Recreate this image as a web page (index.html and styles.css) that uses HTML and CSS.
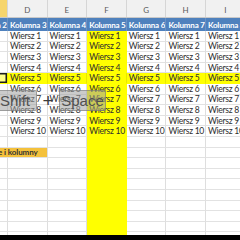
FILE: index.html
```html
<!DOCTYPE html>
<html>
<head>
<meta charset="utf-8">
<link rel="stylesheet" href="styles.css">
</head>
<body>
<div class="screen">
  <div class="sheet">
    <div class="row colheads">
      <div class="ch sel">C</div><div class="ch">D</div><div class="ch">E</div><div class="ch">F</div><div class="ch">G</div><div class="ch">H</div><div class="ch">I</div>
    </div>
    <div class="row thead">
      <div class="th">Kolumna 2</div><div class="th">Kolumna 3</div><div class="th">Kolumna 4</div><div class="th">Kolumna 5</div><div class="th">Kolumna 6</div><div class="th">Kolumna 7</div><div class="th">Kolumna 8</div>
    </div>
    <div class="row"><div class="c"></div><div class="c">Wiersz 1</div><div class="c">Wiersz 1</div><div class="c hl">Wiersz 1</div><div class="c">Wiersz 1</div><div class="c">Wiersz 1</div><div class="c">Wiersz 1</div></div>
    <div class="row"><div class="c"></div><div class="c">Wiersz 2</div><div class="c">Wiersz 2</div><div class="c hl">Wiersz 2</div><div class="c">Wiersz 2</div><div class="c">Wiersz 2</div><div class="c">Wiersz 2</div></div>
    <div class="row"><div class="c"></div><div class="c">Wiersz 3</div><div class="c">Wiersz 3</div><div class="c hl">Wiersz 3</div><div class="c">Wiersz 3</div><div class="c">Wiersz 3</div><div class="c">Wiersz 3</div></div>
    <div class="row"><div class="c"></div><div class="c">Wiersz 4</div><div class="c">Wiersz 4</div><div class="c hl">Wiersz 4</div><div class="c">Wiersz 4</div><div class="c">Wiersz 4</div><div class="c">Wiersz 4</div></div>
    <div class="row hlrow"><div class="c active"></div><div class="c">Wiersz 5</div><div class="c">Wiersz 5</div><div class="c hl">Wiersz 5</div><div class="c">Wiersz 5</div><div class="c">Wiersz 5</div><div class="c">Wiersz 5</div></div>
    <div class="row"><div class="c"></div><div class="c">Wiersz 6</div><div class="c">Wiersz 6</div><div class="c hl">Wiersz 6</div><div class="c">Wiersz 6</div><div class="c">Wiersz 6</div><div class="c">Wiersz 6</div></div>
    <div class="row"><div class="c"></div><div class="c">Wiersz 7</div><div class="c">Wiersz 7</div><div class="c hl">Wiersz 7</div><div class="c">Wiersz 7</div><div class="c">Wiersz 7</div><div class="c">Wiersz 7</div></div>
    <div class="row"><div class="c"></div><div class="c">Wiersz 8</div><div class="c">Wiersz 8</div><div class="c hl">Wiersz 8</div><div class="c">Wiersz 8</div><div class="c">Wiersz 8</div><div class="c">Wiersz 8</div></div>
    <div class="row"><div class="c"></div><div class="c">Wiersz 9</div><div class="c">Wiersz 9</div><div class="c hl">Wiersz 9</div><div class="c">Wiersz 9</div><div class="c">Wiersz 9</div><div class="c">Wiersz 9</div></div>
    <div class="row"><div class="c"></div><div class="c">Wiersz 10</div><div class="c">Wiersz 10</div><div class="c hl">Wiersz 10</div><div class="c">Wiersz 10</div><div class="c">Wiersz 10</div><div class="c">Wiersz 10</div></div>
    <div class="row"><div class="c"></div><div class="c"></div><div class="c"></div><div class="c hl"></div><div class="c"></div><div class="c"></div><div class="c"></div></div>
    <div class="row"><div class="c label">ze i kolumny</div><div class="c"></div><div class="c hl"></div><div class="c"></div><div class="c"></div><div class="c"></div></div>
    <div class="row"><div class="c"></div><div class="c"></div><div class="c"></div><div class="c hl"></div><div class="c"></div><div class="c"></div><div class="c"></div></div>
    <div class="row"><div class="c"></div><div class="c"></div><div class="c"></div><div class="c hl"></div><div class="c"></div><div class="c"></div><div class="c"></div></div>
    <div class="row"><div class="c"></div><div class="c"></div><div class="c"></div><div class="c hl"></div><div class="c"></div><div class="c"></div><div class="c"></div></div>
    <div class="row"><div class="c"></div><div class="c"></div><div class="c"></div><div class="c hl"></div><div class="c"></div><div class="c"></div><div class="c"></div></div>
    <div class="row"><div class="c"></div><div class="c"></div><div class="c"></div><div class="c hl"></div><div class="c"></div><div class="c"></div><div class="c"></div></div>
    <div class="row"><div class="c"></div><div class="c"></div><div class="c"></div><div class="c hl"></div><div class="c"></div><div class="c"></div><div class="c"></div></div>
    <div class="row"><div class="c"></div><div class="c"></div><div class="c"></div><div class="c hl"></div><div class="c"></div><div class="c"></div><div class="c"></div></div>
    <div class="row"><div class="c"></div><div class="c"></div><div class="c"></div><div class="c hl"></div><div class="c"></div><div class="c"></div><div class="c"></div></div>
  </div>
  <div class="keys">
    <div class="key shift">Shift</div>
    <div class="plus">+</div>
    <div class="key space">Space</div>
  </div>
</div>
<div class="footer"></div>
</body>
</html>
```
FILE: styles.css
```css
html, body {
  margin: 0;
  padding: 0;
  background: #ffffff;
  overflow: hidden;
}
body {
  width: 240px;
  height: 240px;
  display: flex;
  flex-direction: column;
  font-family: Lato, "Liberation Sans", sans-serif;
}
.screen {
  position: relative;
  height: 235px;
  overflow: hidden;
}
.sheet {
  margin-left: -31.6px;
  display: flex;
  flex-direction: column;
}
.row {
  display: grid;
  grid-template-columns: repeat(7, 39.6px);
  height: 10.6px;
}
.colheads {
  height: 18px;
  background: #f1f1f1;
  border-bottom: 1px solid #c9c9c9;
  box-sizing: border-box;
}
.ch {
  display: flex;
  align-items: flex-end;
  justify-content: center;
  padding-bottom: 2px;
  font-size: 8px;
  color: #5a5a5a;
  border-right: 1px solid #d6d6d6;
}
.ch.sel {
  background: #f6d56c;
}
.thead {
  height: 13px;
  background: #4f81bd;
}
.th {
  display: flex;
  align-items: center;
  padding-left: 2px;
  font-size: 8px;
  font-weight: bold;
  color: #ffffff;
  letter-spacing: -0.2px;
  white-space: nowrap;
  overflow: hidden;
  border-right: 1px solid rgba(255,255,255,0.15);
}
.c {
  box-sizing: border-box;
  display: flex;
  align-items: center;
  padding-left: 2px;
  font-size: 8.6px;
  color: #2e2e2e;
  letter-spacing: -0.3px;
  white-space: nowrap;
  overflow: hidden;
  border-right: 1px solid #dedede;
  border-bottom: 1px solid #e2e2e2;
}
.c.hl, .hlrow .c {
  background: #ffff00;
  border-color: #ffff00;
}
.hlrow .c {
  border-right-color: #e8e800;
}
.c.active {
  box-shadow: inset 0 0 0 1.5px #1e1e1e;
  background: #ffff8c;
}
.c.label {
  grid-column: span 2;
  justify-content: flex-end;
  padding-right: 9px;
  background: #f4c13c;
  font-size: 8px;
  font-weight: bold;
  letter-spacing: -0.1px;
  color: #333333;
}
.keys {
  position: absolute;
  left: -6px;
  top: 90px;
  display: flex;
  align-items: center;
}
.key {
  height: 21px;
  box-sizing: border-box;
  display: flex;
  align-items: center;
  background: rgba(160,160,160,0.55);
  border: 1px solid rgba(110,110,110,0.5);
  border-radius: 2px;
  font-family: "Liberation Sans", sans-serif;
  font-size: 15px;
  color: #505050;
}
.shift {
  width: 43px;
  padding-left: 5px;
}
.plus {
  width: 22px;
  text-align: center;
  font-family: "Liberation Sans", sans-serif;
  font-size: 19px;
  color: #3c3c3c;
  line-height: 20px;
}
.space {
  width: 47px;
  justify-content: center;
}
.footer {
  height: 5px;
  background: #000000;
}
```
